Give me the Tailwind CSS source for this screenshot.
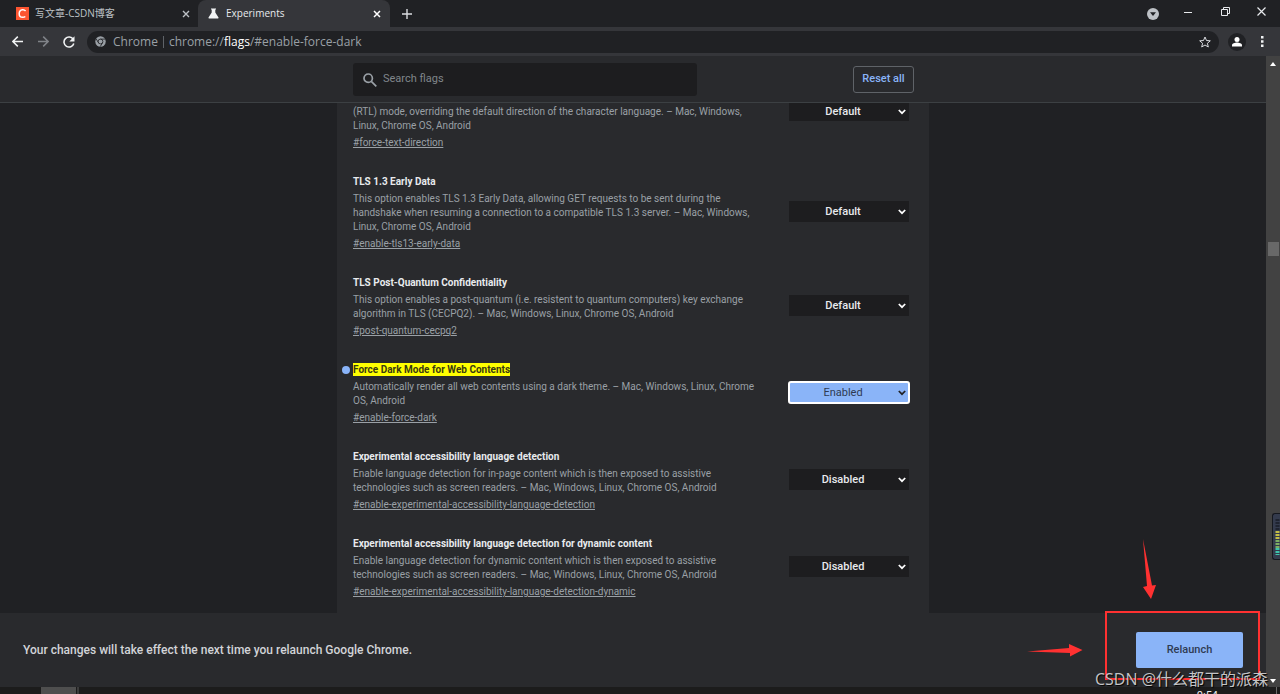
<!DOCTYPE html>
<html lang="en">
<head>
  <meta charset="UTF-8" />
  <meta name="viewport" content="width=device-width, initial-scale=1" />
  <title>Experiments</title>
  <script src="https://cdn.jsdelivr.net/npm/@tailwindcss/browser@4"></script>
</head>
<body class="h-screen flex flex-col overflow-hidden relative bg-[#202124] text-[#9aa0a6] font-[Roboto,sans-serif] text-[11px]">

<!-- Tab strip -->
<header class="h-[27px] shrink-0 flex bg-[#202124] font-['Open_Sans','Noto_Sans_CJK_SC',sans-serif] text-[10px]">
  <div class="w-[198px] flex items-center pl-4 pr-2 text-[#bdc1c6]">
    <svg class="w-[13px] h-[13px] mr-[6px]" viewBox="0 0 13 13"><rect width="13" height="13" fill="#fc5531"/><path d="M9.600 4C8.700 2.900 7.600 2.600 6.500 2.700 4.500 2.900 3.200 4.600 3.200 6.700c0 2.200 1.400 3.600 3.500 3.600 1.100 0 2-.3 2.600-.8" fill="none" stroke="#fff" stroke-width="1.500"/></svg>
    <span class="flex-1">写文章-CSDN博客</span>
    <button class="w-2 h-[27px]" aria-label="Close tab">
      <svg class="w-2 h-2" viewBox="0 0 8 8" stroke="#bdc1c6" stroke-width="1.400"><path d="M1 1l6 6M7 1l-6 6"/></svg>
    </button>
  </div>
  <div class="w-[192px] flex items-center pl-[10px] pr-[9px] bg-[#35363a] rounded-t-lg text-[#e8eaed]">
    <svg class="w-[11px] h-[11px] mr-[7px]" viewBox="0 0 11 11" fill="#f1f3f4"><path d="M3 0.500h5v1H7.300v3L10.500 9.500q.3 1-.7 1H1.200q-1 0-.7-1L3.700 4.500v-3H3z"/></svg>
    <span class="flex-1 font-medium">Experiments</span>
    <button class="w-2 h-[27px]" aria-label="Close tab">
      <svg class="w-2 h-2" viewBox="0 0 8 8" stroke="#fff" stroke-width="1.500"><path d="M1 1l6 6M7 1l-6 6"/></svg>
    </button>
  </div>
  <button class="w-[34px] flex items-center justify-center" aria-label="New tab">
    <svg class="w-[10px] h-[10px]" viewBox="0 0 10 10" stroke="#dadce0" stroke-width="1.400"><path d="M5 0v10M0 5h10"/></svg>
  </button>
  <div class="flex-1"></div>
  <div class="flex items-center gap-[25px] pr-[14px]">
    <button class="w-3" aria-label="Search tabs"><svg class="w-3 h-3 mt-px" viewBox="0 0 12 12"><circle cx="6" cy="6" r="6" fill="#bdc1c6"/><path d="M3 4.300h6L6 8z" fill="#202124"/></svg></button>
    <button class="w-2" aria-label="Minimize"><svg class="w-2 h-[10px] -mt-1" viewBox="0 0 8 10"><path d="M0 5.500h8" stroke="#e8eaed"/></svg></button>
    <button class="w-[9px] ml-1" aria-label="Restore"><svg class="w-[9px] h-[9px] -mt-1" viewBox="0 0 9 9" fill="none" stroke="#e8eaed"><path d="M.5 2.500h6v6h-6zM2.500 2.500v-2h6v6h-2"/></svg></button>
    <button class="w-[9px] ml-[2px]" aria-label="Close"><svg class="w-[9px] h-[9px] -mt-1" viewBox="0 0 9 9" stroke="#e8eaed" stroke-width="1.200"><path d="M.5.5l8 8M8.500.5l-8 8"/></svg></button>
  </div>
</header>

<!-- Toolbar -->
<nav class="h-[29px] shrink-0 flex items-center bg-[#35363a] pl-3 pr-4 font-['Open_Sans',sans-serif] text-xs">
  <button class="w-[11px] mr-[15px]" aria-label="Back"><svg class="w-[11px] h-[11px]" viewBox="0 0 11 11" fill="none" stroke="#f1f3f4" stroke-width="1.500"><path d="M11 5.500H1M5.800.6L.9 5.500l4.900 4.900"/></svg></button>
  <button class="w-[11px] mr-[14px]" aria-label="Forward"><svg class="w-[11px] h-[11px]" viewBox="0 0 11 11" fill="none" stroke="#808388" stroke-width="1.500"><path d="M0 5.500h10M5.200.6l4.900 4.900-4.900 4.900"/></svg></button>
  <button class="w-3 mr-3" aria-label="Reload"><svg class="w-3 h-3" viewBox="0 0 12 12"><path d="M10.200 3.300A5 5 0 1 0 10.800 7.500" fill="none" stroke="#f1f3f4" stroke-width="1.600"/><path d="M11.500.3v5.200H6.300z" fill="#f1f3f4"/></svg></button>
  <div class="flex-1 h-[22px] flex items-center rounded-full bg-[#202124] pl-2 pr-2">
    <svg class="w-[11px] h-[11px] mr-[7px]" viewBox="0 0 12 12"><circle cx="6" cy="6" r="5.700" fill="#9aa0a6"/><circle cx="6" cy="6" r="2.600" fill="none" stroke="#202124" stroke-width=".9"/><path d="M6 3.400h5.200M3.700 7.200L1.200 3M8.300 7.200L5.700 11.600" stroke="#202124" stroke-width=".9"/></svg>
    <span>Chrome</span>
    <span class="w-px h-3 mx-[5px] bg-[#5f6368]"></span>
    <span class="flex-1">chrome://<span class="text-white">flags</span>/#enable-force-dark</span>
    <button class="w-3" aria-label="Bookmark"><svg class="w-3 h-3" viewBox="0 0 12 12" fill="none" stroke="#dadce0"><path d="M6 1l1.500 3.500 3.800.3-2.900 2.500.9 3.700L6 9l-3.300 2 .9-3.700L.7 4.800l3.800-.3z"/></svg></button>
  </div>
  <button class="w-[18px] ml-[9px]" aria-label="Profile"><svg class="w-[18px] h-[18px]" viewBox="0 0 18 18"><circle cx="9" cy="9" r="9" fill="#202124"/><circle cx="9" cy="6.500" r="2.500" fill="#fff"/><path d="M4 13.500v-1.300c0-1.700 3-2.600 5-2.600s5 .9 5 2.600v1.300z" fill="#fff"/></svg></button>
  <button class="w-[3px] ml-[15px]" aria-label="Menu"><svg class="w-[3px] h-[11px]" viewBox="0 0 3 11" fill="#f1f3f4"><path d="M0 0h2.500v2.500H0zM0 4.200h2.500v2.500H0zM0 8.400h2.500v2.500H0z"/></svg></button>
</nav>

<div class="flex-1 min-h-0 flex">
  <div class="flex-1 min-w-0 flex flex-col">

    <!-- Search -->
    <div class="h-[47px] shrink-0 bg-[#292a2d] border-b border-[#3c4043]">
      <div class="w-[592px] h-full mx-auto flex items-center justify-between pt-px pl-4 pr-[15px]">
        <label class="w-[344px] h-[33px] flex items-center rounded-[3px] bg-[#1d1d1f] pl-[10px] gap-[6px]">
          <svg class="w-[14px] h-[14px]" viewBox="0 0 14 14" fill="none" stroke="#9aa0a6" stroke-width="1.700"><circle cx="5.200" cy="5.200" r="4.200"/><path d="M8.300 8.300l5 5"/></svg>
          <input type="text" placeholder="Search flags" aria-label="Search flags" class="flex-1 outline-none placeholder:text-[#80868b]" />
        </label>
        <button class="w-[61px] h-[27px] rounded-[3px] border border-[#5f6368] text-[#8ab4f8] font-medium">Reset all</button>
      </div>
    </div>

    <!-- Flags -->
    <main class="flex-1 min-h-0 overflow-hidden">
      <div class="w-[592px] min-h-full mx-auto pl-4 pr-5 bg-[#292a2d] text-[10px] leading-[14px]">

        <section class="flex items-start justify-between mb-[21px]">
          <div class="w-[420px] pt-[2px]">
            <p>(RTL) mode, overriding the default direction of the character language. – Mac, Windows,<br>Linux, Chrome OS, Android</p>
            <a href="#force-text-direction" class="block leading-[18px] mt-px underline">#force-text-direction</a>
          </div>
          <div class="relative">
            <select aria-label="Force text direction" class="block appearance-none w-[120px] h-[18px] pb-px pr-3 bg-[#1d1d1f] text-[11px] text-[#e8eaed] font-medium [text-align-last:center]"><option>Default</option></select>
            <svg class="absolute right-[3px] top-[6px] w-2 h-[6px] pointer-events-none" viewBox="0 0 8 6" fill="none" stroke="#fff" stroke-width="1.700"><path d="M.8 1L4 4.200 7.200 1"/></svg>
          </div>
        </section>

        <section class="flex items-center justify-between mb-[21px]">
          <div class="w-[420px]">
            <h2 class="leading-[18px] mb-px font-bold text-[#e8eaed]">TLS 1.3 Early Data</h2>
            <p>This option enables TLS 1.3 Early Data, allowing GET requests to be sent during the<br>handshake when resuming a connection to a compatible TLS 1.3 server. – Mac, Windows,<br>Linux, Chrome OS, Android</p>
            <a href="#enable-tls13-early-data" class="block leading-[18px] mt-px underline">#enable-tls13-early-data</a>
          </div>
          <div class="relative mb-[3px]">
            <select aria-label="TLS 1.3 Early Data" class="block appearance-none w-[120px] h-[21px] pt-px pr-3 bg-[#1d1d1f] text-[11px] text-[#e8eaed] font-medium [text-align-last:center]"><option>Default</option></select>
            <svg class="absolute right-[3px] top-2 w-2 h-[6px] pointer-events-none" viewBox="0 0 8 6" fill="none" stroke="#fff" stroke-width="1.700"><path d="M.8 1L4 4.200 7.200 1"/></svg>
          </div>
        </section>

        <section class="flex items-center justify-between mb-[21px]">
          <div class="w-[420px]">
            <h2 class="leading-[18px] mb-px font-bold text-[#e8eaed]">TLS Post-Quantum Confidentiality</h2>
            <p>This option enables a post-quantum (i.e. resistent to quantum computers) key exchange<br>algorithm in TLS (CECPQ2). – Mac, Windows, Linux, Chrome OS, Android</p>
            <a href="#post-quantum-cecpq2" class="block leading-[18px] mt-px underline">#post-quantum-cecpq2</a>
          </div>
          <div class="relative mb-[3px]">
            <select aria-label="TLS Post-Quantum Confidentiality" class="block appearance-none w-[120px] h-[21px] pt-px pr-3 bg-[#1d1d1f] text-[11px] text-[#e8eaed] font-medium [text-align-last:center]"><option>Default</option></select>
            <svg class="absolute right-[3px] top-2 w-2 h-[6px] pointer-events-none" viewBox="0 0 8 6" fill="none" stroke="#fff" stroke-width="1.700"><path d="M.8 1L4 4.200 7.200 1"/></svg>
          </div>
        </section>

        <section class="flex items-center justify-between mb-[21px]">
          <div class="w-[420px] relative">
            <span class="absolute -left-[11px] top-[5px] w-2 h-2 rounded-full bg-[#8ab4f8]"></span>
            <h2 class="leading-[18px] mb-px font-bold text-[#202124]"><mark class="bg-[#ff0] text-[#3a3a10] py-px">Force Dark Mode for Web Contents</mark></h2>
            <p>Automatically render all web contents using a dark theme. – Mac, Windows, Linux, Chrome<br>OS, Android</p>
            <a href="#enable-force-dark" class="block leading-[18px] mt-px underline">#enable-force-dark</a>
          </div>
          <div class="relative mb-[3px]">
            <select aria-label="Force Dark Mode for Web Contents" class="block appearance-none w-[120px] h-[21px] pt-px pr-3 rounded-[2px] bg-[#8ab4f8] text-[11px] text-[#2f3b52] outline-2 -outline-offset-1 outline-white [text-align-last:center]"><option>Enabled</option></select>
            <svg class="absolute right-[3px] top-2 w-2 h-[6px] pointer-events-none" viewBox="0 0 8 6" fill="none" stroke="#202124" stroke-width="1.700"><path d="M.8 1L4 4.200 7.200 1"/></svg>
          </div>
        </section>

        <section class="flex items-center justify-between mb-[21px]">
          <div class="w-[420px]">
            <h2 class="leading-[18px] mb-px font-bold text-[#e8eaed]">Experimental accessibility language detection</h2>
            <p>Enable language detection for in-page content which is then exposed to assistive<br>technologies such as screen readers. – Mac, Windows, Linux, Chrome OS, Android</p>
            <a href="#enable-experimental-accessibility-language-detection" class="block leading-[18px] mt-px underline">#enable-experimental-accessibility-language-detection</a>
          </div>
          <div class="relative mb-[3px]">
            <select aria-label="Experimental accessibility language detection" class="block appearance-none w-[120px] h-[21px] pt-px pr-3 bg-[#1d1d1f] text-[11px] text-[#e8eaed] font-medium [text-align-last:center]"><option>Disabled</option></select>
            <svg class="absolute right-[3px] top-2 w-2 h-[6px] pointer-events-none" viewBox="0 0 8 6" fill="none" stroke="#fff" stroke-width="1.700"><path d="M.8 1L4 4.200 7.200 1"/></svg>
          </div>
        </section>

        <section class="flex items-center justify-between">
          <div class="w-[420px]">
            <h2 class="leading-[18px] mb-px font-bold text-[#e8eaed]">Experimental accessibility language detection for dynamic content</h2>
            <p>Enable language detection for dynamic content which is then exposed to assistive<br>technologies such as screen readers. – Mac, Windows, Linux, Chrome OS, Android</p>
            <a href="#enable-experimental-accessibility-language-detection-dynamic" class="block leading-[18px] mt-px underline">#enable-experimental-accessibility-language-detection-dynamic</a>
          </div>
          <div class="relative mb-[3px]">
            <select aria-label="Experimental accessibility language detection for dynamic content" class="block appearance-none w-[120px] h-[21px] pt-px pr-3 bg-[#1d1d1f] text-[11px] text-[#e8eaed] font-medium [text-align-last:center]"><option>Disabled</option></select>
            <svg class="absolute right-[3px] top-2 w-2 h-[6px] pointer-events-none" viewBox="0 0 8 6" fill="none" stroke="#fff" stroke-width="1.700"><path d="M.8 1L4 4.200 7.200 1"/></svg>
          </div>
        </section>

      </div>
    </main>

    <!-- Relaunch bar -->
    <footer class="h-[74px] shrink-0 flex items-center justify-between bg-[#292a2d] pl-[23px] pr-[23px]">
      <p class="text-xs font-medium text-[#d2d4d8]">Your changes will take effect the next time you relaunch Google Chrome.</p>
      <button class="w-[107px] h-9 rounded-[2px] bg-[#8ab4f8] text-[#2f3b52] text-[11px] font-medium">Relaunch</button>
    </footer>
  </div>

  <!-- Scrollbar -->
  <div class="w-[14px] shrink-0 flex flex-col items-center bg-[#424242] pt-[6px] pb-1">
    <svg class="w-[6px] h-1" viewBox="0 0 6 4" fill="#fff"><path d="M0 4L3 0l3 4z"/></svg>
    <div class="w-[11px] h-[14px] mt-[176px] mb-auto bg-[#686868]"></div>
    <svg class="w-[6px] h-1" viewBox="0 0 6 4" fill="#fff"><path d="M0 0l3 4 3-4z"/></svg>
  </div>
</div>

<!-- Taskbar -->
<div class="h-[7px] shrink-0 flex overflow-hidden bg-[#1c1c1c] pl-[41px] pr-[3px]">
  <span class="w-[35px] bg-[#4e4e4e]"></span>
  <span class="w-[2px] ml-px bg-[#3c3c3c]"></span>
  <span class="ml-auto mr-[58px] pt-[3px] leading-[11px] text-[#e8eaed]">0:54</span>
  <span class="w-px bg-[#6b6b6b]"></span>
</div>

<!-- Level meter docked at the screen edge -->
<div class="absolute right-0 bottom-[134px] w-2 h-[47px] rounded-l-[3px] border border-r-0 border-[#15181f] bg-[#343b4d]">
  <svg class="w-[7px] h-[45px]" viewBox="0 0 7 45" fill="none" stroke-width="4" stroke-dasharray="2 1"><path d="M4.500 5v12" stroke="#1f2430"/><path d="M4.500 17v9" stroke="#c3bd45"/><path d="M4.500 26v8" stroke="#7dae62"/><path d="M4.500 34v7" stroke="#3fc4ac"/></svg>
</div>

<!-- Annotations -->
<svg class="absolute right-0 bottom-0 w-[280px] h-[164px] pointer-events-none" viewBox="0 0 280 164" fill="#ff3131">
  <path d="M143 9L147 56l-4 1 8 12 5-14-4 .5z"/>
  <path d="M27 121.500l42-3.500V114l13.500 6-12.500 6.500V123z"/>
  <rect x="106" y="82" width="153" height="67" fill="none" stroke="#ff3131" stroke-width="2"/>
</svg>
<p class="absolute right-3 bottom-1 leading-[22px] text-base text-[#c4c4c6] font-['Open_Sans','Noto_Sans_CJK_SC',sans-serif] [text-shadow:1px_1px_1px_#000]">CSDN @什么都干的派森</p>

</body>
</html>
